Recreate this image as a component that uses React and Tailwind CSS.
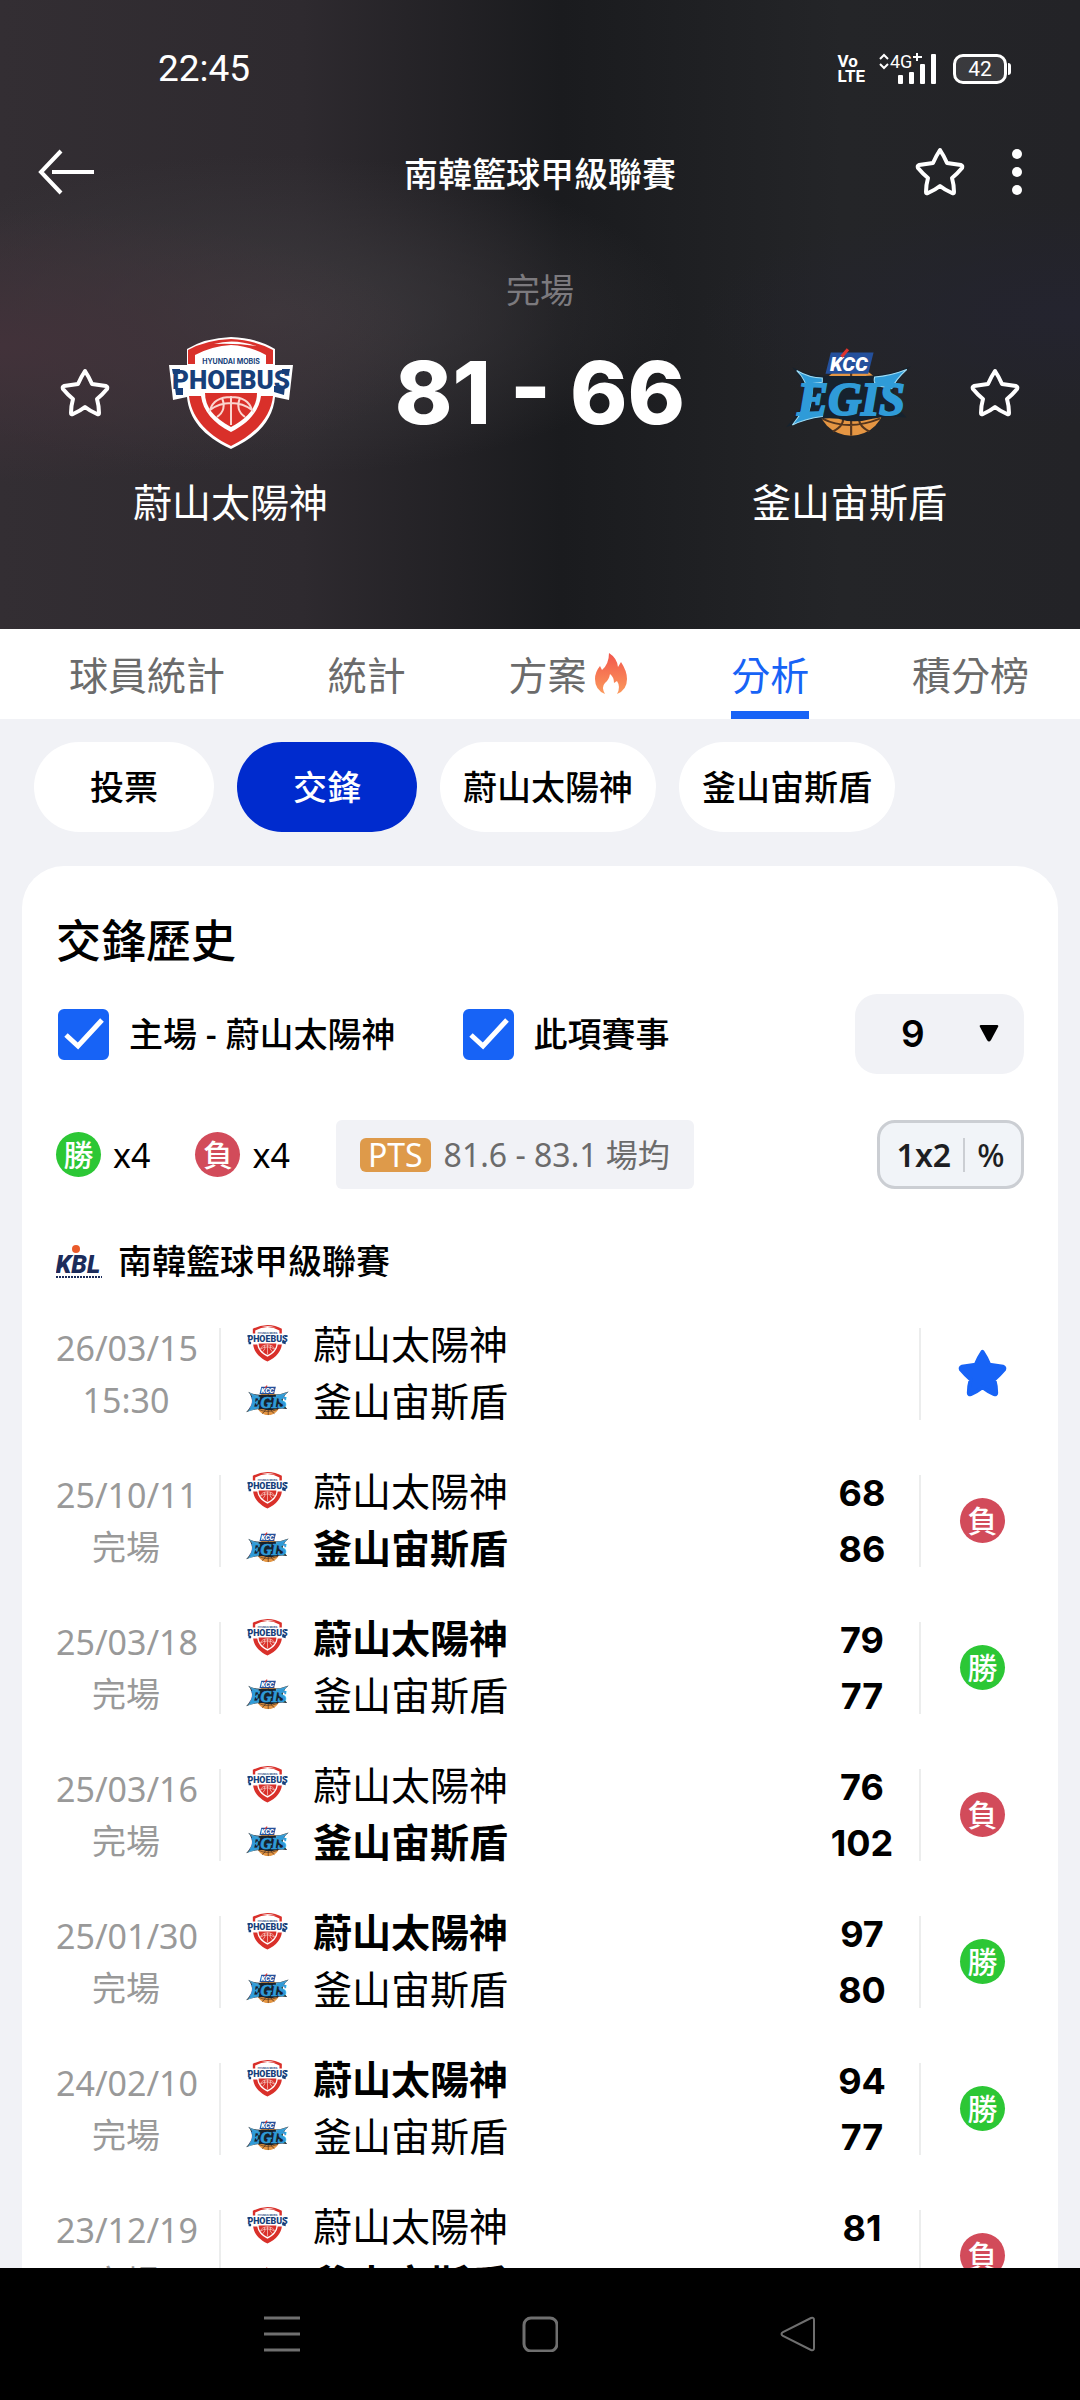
import { useState } from 'react'
import clsx from 'clsx'

const HOME = '蔚山太陽神'
const AWAY = '釜山宙斯盾'
const LEAGUE = '南韓籃球甲級聯賽'

const TABS = ['球員統計', '統計', '方案', '分析', '積分榜']
const CHIPS = ['投票', '交鋒', HOME, AWAY]

const MATCHES = [
  { date: '26/03/15', status: '15:30' },
  { date: '25/10/11', status: '完場', home: 68, away: 86 },
  { date: '25/03/18', status: '完場', home: 79, away: 77 },
  { date: '25/03/16', status: '完場', home: 76, away: 102 },
  { date: '25/01/30', status: '完場', home: 97, away: 80 },
  { date: '24/02/10', status: '完場', home: 94, away: 77 },
  { date: '23/12/19', status: '完場', home: 81, away: 87 },
]

export default function App() {
  const [tab, setTab] = useState('分析')
  const [chip, setChip] = useState('交鋒')

  return (
    <div className="flex h-screen flex-col bg-[#f1f2f6] font-['Noto_Sans','Noto_Sans_CJK_TC',sans-serif] text-black">
      <Header />

      {/* Tabs */}
      <nav className="flex h-[90px] shrink-0 justify-between bg-white pr-[51px] pl-[69px]">
        {TABS.map((t) => (
          <button
            key={t}
            onClick={() => setTab(t)}
            className={clsx(
              'flex items-center gap-2 border-y-8 border-t-transparent text-[39px] leading-none',
              tab === t ? 'border-b-[#1763f6] text-[#1763f6]' : 'border-b-transparent text-[#6b6b6b]'
            )}
          >
            {t}
            {t === '方案' && <Flame />}
          </button>
        ))}
      </nav>

      <main className="min-h-0 flex-1 overflow-hidden">
        <div className="flex gap-[23px] px-[34px] pt-[23px] pb-[34px]">
          {CHIPS.map((c) => (
            <button
              key={c}
              onClick={() => setChip(c)}
              className={clsx(
                'h-[90px] min-w-[180px] rounded-full px-[23px] text-[34px] leading-none font-medium',
                chip === c ? 'bg-[#002bce] text-white' : 'bg-white'
              )}
            >
              {c}
            </button>
          ))}
        </div>

        <section className="mx-[22px] rounded-t-[42px] bg-white px-[34px] pt-12">
          <h2 className="text-[45px] leading-[54px] font-medium">交鋒歷史</h2>
          <Filters />
          <Summary />
          <div className="mt-12 flex h-12 items-center gap-4">
            <KblLogo />
            <h3 className="text-[34px] leading-none font-medium">{LEAGUE}</h3>
          </div>
          <ul className="mt-[15px]">
            {MATCHES.map((m) => (
              <MatchRow key={m.date} match={m} />
            ))}
          </ul>
        </section>
      </main>

      <SystemNav />
    </div>
  )
}

function Header() {
  return (
    <header className="shrink-0 bg-[#1c1d20] bg-[radial-gradient(ellipse_at_0%_55%,#42323a_0%,transparent_28%),radial-gradient(ellipse_at_25%_50%,#3c393d_0%,transparent_36%),radial-gradient(ellipse_at_100%_50%,#24242f_0%,transparent_25%),linear-gradient(to_right,#332e33_0%,#2e2a2f_28%,#1a1b1e_52%,#242528_78%,#232327_100%)] pb-[99px] text-white">
      <StatusBar />
      <div className="mt-11 grid h-[72px] grid-cols-[1fr_auto_1fr] items-center px-[38px]">
        <button aria-label="返回" className="justify-self-start">
          <svg width="58" height="46" viewBox="0 0 58 46" fill="none" stroke="currentColor" strokeWidth="4">
            <path d="M23 2 3 23l20 21M14 23h42" />
          </svg>
        </button>
        <h1 className="pt-1 text-[34px] leading-none font-medium">{LEAGUE}</h1>
        <div className="mr-[19px] flex items-center gap-[46px] justify-self-end">
          <FavoriteButton label="收藏賽事" />
          <button aria-label="更多">
            <svg width="12" height="48" viewBox="0 0 12 48" fill="currentColor">
              <circle cx="6" cy="6" r="5" />
              <circle cx="6" cy="24" r="5" />
              <circle cx="6" cy="42" r="5" />
            </svg>
          </button>
        </div>
      </div>

      <div className="mt-[58px] text-center text-[34px] leading-[48px] text-[#7c7a7e]">完場</div>

      <div className="mt-[14px] grid grid-cols-[1fr_auto_1fr] items-center px-[60px]">
        <div className="flex items-center gap-[58px]">
          <FavoriteButton label={HOME} />
          <PhoebusLogo className="h-[114px] w-[126px]" />
        </div>
        <div className="font-['Inter',sans-serif] text-[87px] leading-[130px] font-extrabold whitespace-nowrap">
          81 - 66
        </div>
        <div className="flex items-center justify-end gap-[58px]">
          <EgisLogo className="h-[90px] w-[126px]" />
          <FavoriteButton label={AWAY} />
        </div>
      </div>
      <div className="mt-4 flex justify-between px-[133px] text-[39px] leading-[56px]">
        <div>{HOME}</div>
        <div>{AWAY}</div>
      </div>
    </header>
  )
}

function StatusBar() {
  return (
    <div className="flex items-end justify-between pt-[46px] pr-[69px] pl-[158px]">
      <span className="font-['Roboto',sans-serif] text-[37px] leading-[46px]">22:45</span>
      <div className="flex h-[46px] items-center gap-[14px] font-['Roboto',sans-serif]">
        <div className="text-[17px] leading-[15px] font-bold">
          <div>Vo</div>
          <div>LTE</div>
        </div>
        <svg width="58" height="34" viewBox="0 0 58 34" fill="currentColor">
          <path fill="none" stroke="currentColor" strokeWidth="2" d="m1 7 4-4 4 4M1 12l4 4 4-4" />
          <text x="11" y="16" fontSize="18">4G</text>
          <path d="M34 4h9v2h-9zM37 1h2v8h-2z" />
          <rect x="19" y="23" width="5" height="9" rx="1" />
          <rect x="30" y="20" width="5" height="12" rx="1" />
          <rect x="41" y="12" width="5" height="20" rx="1" />
          <rect x="52" y="2" width="5" height="30" rx="1" />
        </svg>
        <div className="ml-[2px] flex items-center">
          <div className="flex h-[30px] w-[54px] items-center justify-center rounded-[10px] border-[3px] border-white bg-white/10 text-[21px] leading-none">
            42
          </div>
          <div className="ml-px h-3 w-[3px] rounded-r bg-white" />
        </div>
      </div>
    </div>
  )
}

function FavoriteButton({ label }) {
  return (
    <button aria-label={label} className="shrink-0">
      <Star className="size-[50px]" fill="none" />
    </button>
  )
}

function Star({ className, fill }) {
  return (
    <svg className={className} viewBox="0 0 50 50" fill={fill} stroke="currentColor" strokeWidth="4" strokeLinejoin="round">
      <path d="M25 3Q29 9 32 16Q39 17 46 18Q48 19 47 21Q42 27 37 31Q39 38 39 45Q39 47 37 46Q30 43 25 39Q20 43 13 46Q11 47 11 45Q11 38 13 31Q8 27 3 21Q2 19 4 18Q11 17 18 16Q21 9 25 3Z" />
    </svg>
  )
}

function Filters() {
  return (
    <div className="mt-[26px] flex h-20 items-center">
      <label className="flex items-center gap-5 text-[34px] leading-none font-medium">
        <Checkbox />
        主場 - {HOME}
      </label>
      <label className="ml-[65px] flex items-center gap-5 text-[34px] leading-none font-medium">
        <Checkbox />
        此項賽事
      </label>
      <div className="relative ml-auto">
        <select
          aria-label="場數"
          defaultValue="9"
          className="h-20 w-[169px] appearance-none rounded-[22px] bg-[#f1f2f6] pl-[46px] font-['Inter',sans-serif] text-[37px] font-semibold"
        >
          <option>9</option>
          <option>20</option>
        </select>
        <svg className="pointer-events-none absolute top-[31px] right-[25px]" width="20" height="17" viewBox="0 0 20 17">
          <path d="M2 0h16q2 0 1 2l-7 13q-2 3-4 0L1 2Q0 0 2 0Z" />
        </svg>
      </div>
    </div>
  )
}

function Checkbox() {
  return (
    <span className="relative ml-[2px] block size-[51px]">
      <input type="checkbox" defaultChecked className="peer block size-full appearance-none rounded-[6px] border-2 border-[#1763f6] checked:bg-[#1763f6]" />
      <svg
        className="pointer-events-none absolute inset-0 hidden peer-checked:block"
        viewBox="0 0 51 51"
        fill="none"
        stroke="white"
        strokeWidth="5"
      >
        <path d="m8 26 12 11 24-26" />
      </svg>
    </span>
  )
}

function Summary() {
  return (
    <div className="mt-[46px] flex h-[69px] items-center text-[34px] leading-none">
      <ResultBadge win />
      <span className="ml-3">x4</span>
      <span className="ml-[45px]">
        <ResultBadge />
      </span>
      <span className="ml-3">x4</span>
      <div className="ml-[46px] flex h-[69px] items-center gap-[13px] rounded-[6px] bg-[#f1f2f6] px-6 text-[32px] text-[#6b6b6b]">
        <span className="rounded-[6px] bg-[#de9a4a] px-2 text-[32px] leading-[34px] text-white">PTS</span>
        81.6 - 83.1 場均
      </div>
      <button className="ml-auto flex h-[69px] w-[147px] items-center justify-center gap-3 rounded-[18px] border-[3px] border-[#cbced3] bg-[#f1f4f8] text-[32px] font-semibold text-[#1d1e22]">
        1x2
        <span className="h-[34px] w-[2px] bg-[#cbced3]" />
        <span className="font-medium">%</span>
      </button>
    </div>
  )
}

function ResultBadge({ win }) {
  return (
    <span
      className={clsx(
        'flex size-[45px] items-center justify-center rounded-full text-[30px] leading-none font-medium text-white',
        win ? 'bg-[#2cc735]' : 'bg-[#d24b5a]'
      )}
    >
      {win ? '勝' : '負'}
    </span>
  )
}

function MatchRow({ match }) {
  const { date, status, home, away } = match
  const played = home !== undefined

  return (
    <li className="flex h-[147px] items-center">
      <div className="w-[140px] text-center text-[34px] leading-[52px] whitespace-nowrap text-[#999]">
        <div>{date}</div>
        <div>{status}</div>
      </div>
      <div className="ml-[23px] h-[92px] w-[2px] bg-[#eceded]" />
      <div className="ml-[25px] flex-1 pb-1 text-[39px] leading-[57px]">
        <div className={clsx('flex items-center gap-6', home > away && 'font-bold')}>
          <PhoebusLogo className="h-[39px] w-[43px]" />
          {HOME}
        </div>
        <div className={clsx('flex items-center gap-6', away > home && 'font-bold')}>
          <EgisLogo className="h-[31px] w-[43px]" />
          {AWAY}
        </div>
      </div>
      <div className="w-[114px] text-center font-['Inter',sans-serif] text-[36px] leading-[56px] font-bold">
        <div>{home}</div>
        <div>{away}</div>
      </div>
      <div className="h-[92px] w-[2px] bg-[#eceded]" />
      <div className="flex w-[103px] justify-center pl-5">
        {played ? <ResultBadge win={home > away} /> : <Star className="size-[49px] text-[#1763f6]" fill="currentColor" />}
      </div>
    </li>
  )
}

function SystemNav() {
  return (
    <nav className="flex h-[132px] shrink-0 items-center justify-center gap-[222px] bg-black text-[#6f6f6f]">
      <button aria-label="最近">
        <svg width="36" height="36" viewBox="0 0 36 36" fill="none" stroke="currentColor" strokeWidth="3">
          <path d="M0 2h36M0 18h36M0 34h36" />
        </svg>
      </button>
      <button aria-label="主頁">
        <svg width="36" height="36" viewBox="0 0 36 36" fill="none" stroke="currentColor" strokeWidth="3">
          <rect x="2" y="2" width="33" height="33" rx="7" />
        </svg>
      </button>
      <button aria-label="返回">
        <svg width="36" height="36" viewBox="0 0 36 36" fill="none" stroke="currentColor" strokeWidth="2">
          <path d="M31 2 3 16q-3 2 0 4l28 14q3 1 3-2V4q0-3-3-2Z" />
        </svg>
      </button>
    </nav>
  )
}

function Flame() {
  return (
    <svg width="34" height="42" viewBox="0 0 34 42">
      <linearGradient id="flame" x1="0" y1="0" x2="0" y2="1">
        <stop offset="0" stopColor="#f2564c" />
        <stop offset="1" stopColor="#fb9a5c" />
      </linearGradient>
      <path
        fill="url(#flame)"
        d="M15 0q8 5 9 14l3-5q6 9 6 17 0 11-10 15 4-7 0-13l-3 2q0-6-4-9-1 6-5 9-4 4 0 11Q1 37 1 26q0-7 5-13l2 4q7-6 7-17Z"
      />
    </svg>
  )
}

function PhoebusLogo({ className }) {
  return (
    <svg className={clsx('shrink-0', className)} viewBox="0 0 126 114">
      <path fill="#fff" d="M63 1q-26 1-44 12v16H1l4 35 14-3c2 22 16 39 44 52 28-13 42-30 44-52l14 3 4-35h-18V13Q89 2 63 1Z" />
      <path fill="#d9302a" d="M20 28V14Q38 4 63 3q24 1 42 11v14h-7V19Q82 10 63 9q-19 1-36 10v9Z" />
      <path fill="#fff" d="M46 8q20-6 42 2-20-3-42-2Z" />
      <path fill="#d9302a" d="M21 60h12c2 15 12 27 30 36 18-9 28-21 30-36h12c-2 19-15 37-42 50C36 97 23 79 21 60Z" />
      <path fill="#d9302a" d="M37 57h52c0 14-9 25-26 34-17-9-26-20-26-34Z" />
      <path
        fill="none"
        stroke="#fbd5cf"
        strokeWidth="2"
        d="M42 74q4-13 21-13t21 13q-9-7-21-7t-21 7ZM63 60v29M54 62q5 12-5 19M72 62q-5 12 5 19"
      />
      <text x="63" y="28" textAnchor="middle" fontSize="7" fontWeight="700" fill="#173f7a" fontFamily="Inter, sans-serif">
        HYUNDAI MOBIS
      </text>
      <text x="63" y="53" textAnchor="middle" fontSize="26" fontWeight="900" fill="#173f7a" fontFamily="Roboto, sans-serif">
        PHOEBUS
      </text>
      {/* serifs hanging off the first and last letters */}
      <path fill="#173f7a" d="M4 33h8v5H5zM7 52h8v7H8zM114 33h8l-1 5h-7zM106 50h11l-1 9-10-3z" />
    </svg>
  )
}

function EgisLogo({ className }) {
  return (
    <svg className={clsx('shrink-0', className)} viewBox="4 0 118 84">
      <circle cx="65" cy="50" r="32" fill="#e59643" />
      <path fill="none" stroke="#54351d" strokeWidth="2" d="M65 16v66M38 66q24 12 54 0M48 78q12-6 9-16M82 78q-12-6-9-16" />
      <path
        fill="#16222e"
        d="M10 18q14 8 32 8h36q22 0 43-9-12 9-16 22-2 13 12 26-18-2-32 1-18 5-32 0-26-2-49 8 15-15 17-28Q20 29 10 18Z"
      />
      <path fill="#2f9bd8" stroke="#9edcf5" d="M14 21q12 7 24 7v4l-9 1q0 14-4 28l13-1v4q-16 2-28 8 12-15 14-28 0-14-10-23Z" />
      <path fill="#2f9bd8" stroke="#9edcf5" d="M117 20q-10 9-14 18l-10-2q-8-1-6-9 15-1 30-7Z" />
      <text
        x="65"
        y="63"
        textAnchor="middle"
        fontSize="43"
        fontWeight="700"
        fontStyle="italic"
        fill="#2f9bd8"
        stroke="#2f9bd8"
        strokeWidth="2"
        fontFamily="Liberation Serif, serif"
      >
        EGIS
      </text>
      <path fill="#24509c" d="M46 4h40l-5 20H41Z" />
      <text x="63" y="21" textAnchor="middle" fontSize="19" fontWeight="900" fontStyle="italic" fill="#fff" fontFamily="Roboto, sans-serif">
        KCC
      </text>
      <path stroke="#e0332d" strokeWidth="3" d="m62 1-6 7" />
    </svg>
  )
}

function KblLogo() {
  return (
    <svg width="46" height="35" viewBox="0 0 46 35" className="shrink-0">
      <text x="22" y="29" textAnchor="middle" fontSize="25" fontWeight="900" fontStyle="italic" fill="#1c2c5b" fontFamily="Roboto, sans-serif">
        KBL
      </text>
      <circle cx="20" cy="5" r="4" fill="#ea5a2a" />
      <path stroke="#1c2c5b" strokeWidth="2" strokeDasharray="2 1" d="M0 33h46" />
    </svg>
  )
}
